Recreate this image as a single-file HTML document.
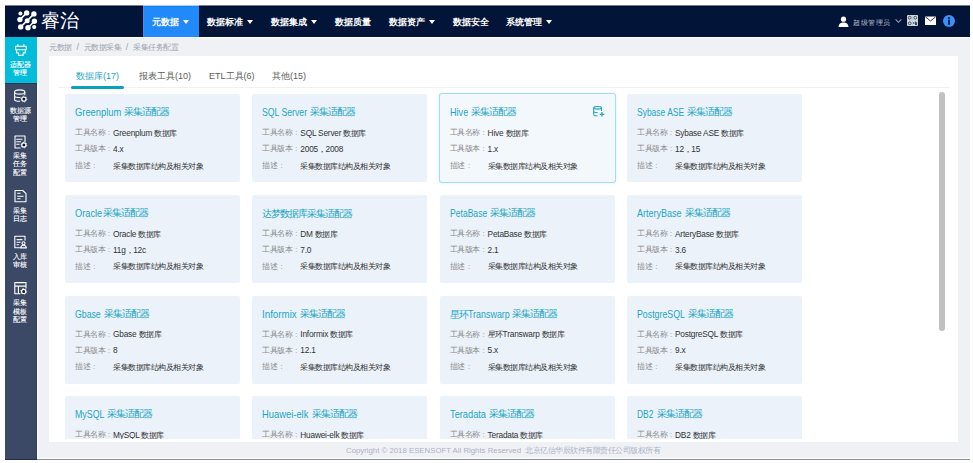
<!DOCTYPE html>
<html><head><meta charset="utf-8">
<style>
*{margin:0;padding:0;box-sizing:border-box}
html,body{width:973px;height:463px;overflow:hidden;background:#fff;font-family:"Liberation Sans",sans-serif}
.abs{position:absolute}
#nav{left:5px;top:5px;width:965px;height:32px;background:#021539}
#navtop{left:5px;top:5px;width:965px;height:1px;background:#7a7f8c}
#navtop2{left:5px;top:6px;width:965px;height:1px;background:#000a2c}
.mi{position:absolute;top:6px;height:32px;line-height:32px;color:#fff;font-weight:bold;font-size:9px;white-space:nowrap}
.tri{display:inline-block;width:0;height:0;border-left:3px solid transparent;border-right:3px solid transparent;border-top:4.5px solid #fff;vertical-align:middle;margin-left:4px;position:relative;top:-1px}
#side{left:5px;top:37px;width:32px;height:422px;background:#3c4966}
#sideact{left:5px;top:37px;width:32px;height:46px;background:#03bcd9}
.st{position:absolute;left:4.4px;width:32px;text-align:center;color:#fff;font-size:7px;line-height:8.3px;-webkit-text-stroke:0.12px #fff}
.si{position:absolute;left:14px;width:13px;height:13px}
#bg{left:37px;top:37px;width:933px;height:421px;background:#f0f1f5}
#bgw{left:37px;top:37px;width:1px;height:421px;background:#fff}
#crumb{left:49px;top:41.5px;width:200px;height:11px;font-size:7.5px;letter-spacing:-0.5px;color:#9aa1ae;white-space:nowrap;line-height:11px}
#crumb span{position:absolute;top:0}
#crumb .sl{letter-spacing:0;font-size:9px;top:0.7px}
#panel{left:49px;top:56px;width:909px;height:386px;background:#fff}
#tabline{left:58px;top:87px;width:891px;height:1px;background:#eff0f3}
#tabul{left:71px;top:86px;width:53px;height:3px;background:#0aa1c1;border-radius:1.5px}
.tab{position:absolute;top:69.5px;font-size:9px;color:#5c5c5c;white-space:nowrap;line-height:12px}
.card{position:absolute;width:175px;height:88px;background:#ebf2fa;border-radius:2px;overflow:hidden}
.card.h{background:#f3f8fd;overflow:visible;box-shadow:0 0 0 1px #a7dcea,0 0 3px 1px rgba(120,200,220,.3)}
.ct{position:absolute;left:10px;top:12px;font-size:10.5px;color:#22a5c4;white-space:nowrap;line-height:12px}
.ct em{font-style:normal;font-size:9.5px;letter-spacing:-1px}
.ct em.c{position:absolute;top:0}
.ct .l{display:inline-block;transform-origin:0 0}
.cr{position:absolute;left:10px;width:160px;height:10px;font-size:7.5px;white-space:nowrap;line-height:10px;color:#333}
.cr i{font-style:normal;position:absolute;left:0;top:0;color:#8c8c8c;letter-spacing:-0.5px}
.cr u{text-decoration:none;position:absolute;top:0;color:#8c8c8c}
.cr s{text-decoration:none;position:absolute;left:38px;top:-0.3px;font-size:8.3px;letter-spacing:-0.2px}
.cr s em{font-style:normal;font-size:7.5px;letter-spacing:-0.5px}
#clip{left:49px;top:92px;width:909px;height:347px;overflow:hidden}
#thumb{left:939px;top:92px;width:6px;height:239px;background:#c1c1c1;border-radius:3px}
#foot{left:0;top:446px;width:973px;height:10px;font-size:8px;color:#a9b3c6;line-height:10px;white-space:nowrap}
#fl{position:absolute;left:346px;top:0;font-size:7.8px}
#fc{position:absolute;left:525px;top:0;font-size:7.5px;letter-spacing:-0.5px}
#bline{left:5px;top:459px;width:965px;height:1px;background:#8d8d8d}
</style></head><body>
<div id="nav" class="abs"></div>
<div id="navtop" class="abs"></div>
<div id="navtop2" class="abs"></div>
<!-- logo -->
<svg class="abs" style="left:15px;top:9px" width="24" height="24" viewBox="0 0 24 24">
 <g fill="#fff">
  <circle cx="5.4" cy="4.4" r="2.0"/><circle cx="11.7" cy="3.9" r="2.7"/><circle cx="18.9" cy="4.9" r="2.7"/>
  <circle cx="4.9" cy="10.6" r="2.7"/><circle cx="12.2" cy="11.7" r="2.5"/><circle cx="19.4" cy="12.2" r="2.7"/>
  <circle cx="5.7" cy="17.9" r="2.7"/><circle cx="13" cy="18.7" r="2.7"/><circle cx="19.2" cy="18.1" r="2.1"/>
 </g>
 <path d="M4.9 10.6 L11.7 3.9 M5.7 17.9 L12.2 11.7 L18.9 4.9 M13 18.7 L19.4 12.2" stroke="#fff" stroke-width="1.6" fill="none"/>
</svg>
<div class="abs" style="left:41px;top:9px;font-size:19px;line-height:24px;color:#fff;white-space:nowrap;font-weight:300">睿治</div>
<!-- menu -->
<div class="abs" style="left:143px;top:5px;width:56px;height:32px;background:#2189f8"></div>
<div class="abs" style="left:143px;top:5px;width:56px;height:1px;background:#a9cff8"></div>
<div class="abs" style="left:143px;top:6px;width:56px;height:1px;background:#1282fb"></div>
<div class="abs" style="left:142px;top:6px;width:1px;height:31px;background:#000a26"></div>
<div class="abs" style="left:143px;top:6px;width:1px;height:31px;background:#2b97ff"></div>
<div class="mi" style="left:152px">元数据<span class="tri"></span></div>
<div class="mi" style="left:207px">数据标准<span class="tri"></span></div>
<div class="mi" style="left:271px">数据集成<span class="tri"></span></div>
<div class="mi" style="left:335px">数据质量</div>
<div class="mi" style="left:389px">数据资产<span class="tri"></span></div>
<div class="mi" style="left:453px">数据安全</div>
<div class="mi" style="left:506px">系统管理<span class="tri"></span></div>
<!-- right icons -->
<svg class="abs" style="left:838px;top:16px" width="11" height="11" viewBox="0 0 11 11"><circle cx="5.5" cy="3.2" r="2.6" fill="#fff"/><path d="M0.5 11 C0.8 7.5 2.8 6.4 5.5 6.4 C8.2 6.4 10.2 7.5 10.5 11 Z" fill="#fff"/></svg>
<div class="abs" style="left:853px;top:18px;font-size:7.3px;letter-spacing:0.6px;line-height:10px;color:#b9bfcc;white-space:nowrap">超级管理员</div>
<svg class="abs" style="left:895px;top:18px" width="7" height="6" viewBox="0 0 7 6"><path d="M0.6 1.3 L3.5 4.3 L6.4 1.3" stroke="#9aa2b4" stroke-width="1.1" fill="none"/></svg>
<svg class="abs" style="left:907px;top:15px" width="11" height="11" viewBox="0 0 11 11"><rect x="0" y="0" width="11" height="11" rx="1" fill="#d3d8e0"/><g fill="none" stroke="#3a4458" stroke-width="0.9"><circle cx="2.7" cy="2.7" r="1.4"/><circle cx="8.3" cy="2.7" r="1.4"/><circle cx="2.7" cy="8.3" r="1.4"/></g><rect x="5.1" y="0" width="0.9" height="11" fill="#9fd6e6"/><rect x="0" y="5.1" width="11" height="0.8" fill="#c8d0dc"/><circle cx="6.8" cy="8" r="0.8" fill="#1a2740"/><path d="M8.6 6.6 V10 M9.6 7.4 V10" stroke="#1a2740" stroke-width="0.9"/></svg>
<svg class="abs" style="left:925px;top:16px" width="11" height="9" viewBox="0 0 11 9"><rect x="0" y="0.5" width="11" height="8.5" fill="#fff"/><path d="M0.3 0.8 L5.5 5 L10.7 0.8" stroke="#223" stroke-width="0.9" fill="none"/></svg>
<svg class="abs" style="left:943px;top:15px" width="12" height="12" viewBox="0 0 12 12"><circle cx="6" cy="6" r="6" fill="#3d8ef7"/><rect x="5.1" y="2.2" width="1.8" height="1.6" fill="#021539"/><rect x="5.1" y="4.6" width="1.8" height="5.2" fill="#021539"/></svg>

<!-- sidebar -->
<div id="side" class="abs"></div>
<div id="sideact" class="abs"></div>
<div class="abs" style="left:5px;top:83px;width:32px;height:1px;background:#2b3550"></div>
<div class="abs" style="left:36px;top:84px;width:1px;height:375px;background:#313d59"></div>

<svg class="abs" style="left:0;top:0" width="40" height="463" viewBox="0 0 40 463">
<g fill="none" stroke="#fff" stroke-width="1.1" stroke-linejoin="round">
<path d="M17.8 44.3 V46.3 M23.9 44.3 V46.3"/>
<rect x="15.6" y="46.4" width="10.6" height="3.4"/>
<path d="M16.6 49.8 V52.9 H18.6 V55.3 H23.2 V52.9 H25.3 V49.8"/>
<ellipse cx="19.7" cy="92" rx="5.1" ry="2.1"/>
<path d="M14.6 92 V99.8 C14.6 100.8 16.6 101.3 20 101.3 M14.6 96 C14.6 97 16.6 97.5 20.5 97.5 M24.8 92 V95.2"/>
<circle cx="23.9" cy="99.1" r="2.1" stroke-width="1.2" fill="#0e1a3a"/><circle cx="23.9" cy="99.1" r="2.9" stroke-width="0.9" stroke-dasharray="1.2 1.84" fill="none"/>
<path d="M20.5 148 H15 V136 H25 V142"/>
<path d="M16.3 139.2 H22.5 M16.3 141.7 H21 M16.3 144.3 H19.5"/>
<circle cx="23.9" cy="145" r="2.1" stroke-width="1.2" fill="#0e1a3a"/><circle cx="23.9" cy="145" r="2.9" stroke-width="0.9" stroke-dasharray="1.2 1.84" fill="none"/>
<path d="M15 190.5 H22.8 L26 193.7 V201.8 H15 Z"/>
<path d="M17.2 193.3 H20.5 M17.2 196.3 H23.6 M17.2 198.8 H20.5"/>
<path d="M20 247.8 H14.8 V236.3 H25 V240.5"/>
<path d="M16.6 239.6 H22.5 M16.6 242.3 H20.5 M16.6 244.7 H19"/>
<circle cx="23.5" cy="243.2" r="1.5"/>
<path d="M20.6 247.9 C21 245.9 22.2 245.3 23.5 245.3 C24.8 245.3 26 245.9 26.4 247.9 Z"/>
<path d="M20.5 293.8 H14.8 V282.6 H26 V288.5 M14.8 286.1 H26 M18.4 286.1 V293.8"/>
<circle cx="23.7" cy="291.4" r="2.1" stroke-width="1.2" fill="#0e1a3a"/><circle cx="23.7" cy="291.4" r="2.9" stroke-width="0.9" stroke-dasharray="1.2 1.84" fill="none"/>
</g></svg>
<div class="st" style="top:60.7px">适配器</div>
<div class="st" style="top:69.0px">管理</div>
<div class="st" style="top:106.7px">数据源</div>
<div class="st" style="top:115.0px">管理</div>
<div class="st" style="top:152.0px">采集</div>
<div class="st" style="top:160.3px">任务</div>
<div class="st" style="top:168.6px">配置</div>
<div class="st" style="top:207.1px">采集</div>
<div class="st" style="top:215.4px">日志</div>
<div class="st" style="top:252.7px">入库</div>
<div class="st" style="top:261.0px">审核</div>
<div class="st" style="top:299.3px">采集</div>
<div class="st" style="top:307.6px">模板</div>
<div class="st" style="top:315.9px">配置</div>
<!-- bg -->
<div id="bg" class="abs"></div>
<div id="bgw" class="abs"></div>
<div class="abs" style="left:37px;top:37px;width:933px;height:1px;background:#fff"></div>
<div class="abs" style="left:37px;top:458px;width:933px;height:1px;background:#fff"></div>
<div id="bline" class="abs"></div>
<div class="abs" style="left:5px;top:459px;width:32px;height:1px;background:#222b40"></div>

<div id="crumb" class="abs"><span style="left:0">元数据</span><span class="sl" style="left:27.6px">/</span><span style="left:34.8px">元数据采集</span><span class="sl" style="left:76.7px">/</span><span style="left:84px">采集任务配置</span></div>
<div id="panel" class="abs"></div>
<div id="tabline" class="abs"></div>
<div id="tabul" class="abs"></div>
<div class="tab" style="left:76px;color:#22a5c4">数据库(17)</div>
<div class="tab" style="left:139px">报表工具(10)</div>
<div class="tab" style="left:209px">ETL工具(6)</div>
<div class="tab" style="left:272px">其他(15)</div>

<div id="clip" class="abs">
<div class="card" style="left:16px;top:2.3px"><div class="ct"><span class="l" style="transform:scaleX(0.891)">Greenplum</span><em class="c" style="left:49.3px">采集适配器</em></div><div class="cr" style="top:34px"><i>工具名称</i><u style="left:33px">:</u><s>Greenplum <em>数据库</em></s></div><div class="cr" style="top:50px"><i>工具版本</i><u style="left:33px">:</u><s>4.x</s></div><div class="cr" style="top:66.5px"><i>描述</i><u style="left:18.3px">:</u><s><em>采集数据库结构及相关对象</em></s></div></div>
<div class="card" style="left:203.3px;top:2.3px"><div class="ct"><span class="l" style="transform:scaleX(0.828)">SQL Server</span><em class="c" style="left:48.1px">采集适配器</em></div><div class="cr" style="top:34px"><i>工具名称</i><u style="left:33px">:</u><s>SQL Server <em>数据库</em></s></div><div class="cr" style="top:50px"><i>工具版本</i><u style="left:33px">:</u><s>2005<em>，</em>2008</s></div><div class="cr" style="top:66.5px"><i>描述</i><u style="left:18.3px">:</u><s><em>采集数据库结构及相关对象</em></s></div></div>
<div class="card h" style="left:390.6px;top:2.3px"><div class="ct"><span class="l" style="transform:scaleX(0.866)">Hive</span><em class="c" style="left:21.2px">采集适配器</em></div><svg class="abs" style="left:153px;top:12px" width="12" height="11" viewBox="0 0 12 11"><g fill="none" stroke="#22a5c4" stroke-width="1.1"><ellipse cx="4.6" cy="1.8" rx="3.9" ry="1.3"/><path d="M0.7 1.8 V8.6 C0.7 9.4 2.4 10 4.6 10 M8.5 1.8 V5 M0.7 5.2 C0.7 6 2.4 6.6 4.6 6.6"/><path d="M9 6 V10.6 M6.7 8.3 H11.3" stroke-width="1.3"/></g></svg><div class="cr" style="top:34px"><i>工具名称</i><u style="left:33px">:</u><s>Hive <em>数据库</em></s></div><div class="cr" style="top:50px"><i>工具版本</i><u style="left:33px">:</u><s>1.x</s></div><div class="cr" style="top:66.5px"><i>描述</i><u style="left:18.3px">:</u><s><em>采集数据库结构及相关对象</em></s></div></div>
<div class="card" style="left:578px;top:2.3px"><div class="ct"><span class="l" style="transform:scaleX(0.807)">Sybase ASE</span><em class="c" style="left:50.1px">采集适配器</em></div><div class="cr" style="top:34px"><i>工具名称</i><u style="left:33px">:</u><s>Sybase ASE <em>数据库</em></s></div><div class="cr" style="top:50px"><i>工具版本</i><u style="left:33px">:</u><s>12<em>，</em>15</s></div><div class="cr" style="top:66.5px"><i>描述</i><u style="left:18.3px">:</u><s><em>采集数据库结构及相关对象</em></s></div></div>
<div class="card" style="left:16px;top:103px"><div class="ct"><span class="l" style="transform:scaleX(0.879)">Oracle</span><em class="c" style="left:27.6px">采集适配器</em></div><div class="cr" style="top:34px"><i>工具名称</i><u style="left:33px">:</u><s>Oracle <em>数据库</em></s></div><div class="cr" style="top:50px"><i>工具版本</i><u style="left:33px">:</u><s>11g<em>，</em>12c</s></div><div class="cr" style="top:66.5px"><i>描述</i><u style="left:18.3px">:</u><s><em>采集数据库结构及相关对象</em></s></div></div>
<div class="card" style="left:203.3px;top:103px"><div class="ct"><em>达梦数据库采集适配器</em></div><div class="cr" style="top:34px"><i>工具名称</i><u style="left:33px">:</u><s>DM <em>数据库</em></s></div><div class="cr" style="top:50px"><i>工具版本</i><u style="left:33px">:</u><s>7.0</s></div><div class="cr" style="top:66.5px"><i>描述</i><u style="left:18.3px">:</u><s><em>采集数据库结构及相关对象</em></s></div></div>
<div class="card" style="left:390.6px;top:103px"><div class="ct"><span class="l" style="transform:scaleX(0.817)">PetaBase</span><em class="c" style="left:40.2px">采集适配器</em></div><div class="cr" style="top:34px"><i>工具名称</i><u style="left:33px">:</u><s>PetaBase <em>数据库</em></s></div><div class="cr" style="top:50px"><i>工具版本</i><u style="left:33px">:</u><s>2.1</s></div><div class="cr" style="top:66.5px"><i>描述</i><u style="left:18.3px">:</u><s><em>采集数据库结构及相关对象</em></s></div></div>
<div class="card" style="left:578px;top:103px"><div class="ct"><span class="l" style="transform:scaleX(0.859)">ArteryBase</span><em class="c" style="left:47.6px">采集适配器</em></div><div class="cr" style="top:34px"><i>工具名称</i><u style="left:33px">:</u><s>ArteryBase <em>数据库</em></s></div><div class="cr" style="top:50px"><i>工具版本</i><u style="left:33px">:</u><s>3.6</s></div><div class="cr" style="top:66.5px"><i>描述</i><u style="left:18.3px">:</u><s><em>采集数据库结构及相关对象</em></s></div></div>
<div class="card" style="left:16px;top:203.6px"><div class="ct"><span class="l" style="transform:scaleX(0.831)">Gbase</span><em class="c" style="left:28.7px">采集适配器</em></div><div class="cr" style="top:34px"><i>工具名称</i><u style="left:33px">:</u><s>Gbase <em>数据库</em></s></div><div class="cr" style="top:50px"><i>工具版本</i><u style="left:33px">:</u><s>8</s></div><div class="cr" style="top:66.5px"><i>描述</i><u style="left:18.3px">:</u><s><em>采集数据库结构及相关对象</em></s></div></div>
<div class="card" style="left:203.3px;top:203.6px"><div class="ct"><span class="l" style="transform:scaleX(0.929)">Informix</span><em class="c" style="left:37.7px">采集适配器</em></div><div class="cr" style="top:34px"><i>工具名称</i><u style="left:33px">:</u><s>Informix <em>数据库</em></s></div><div class="cr" style="top:50px"><i>工具版本</i><u style="left:33px">:</u><s>12.1</s></div><div class="cr" style="top:66.5px"><i>描述</i><u style="left:18.3px">:</u><s><em>采集数据库结构及相关对象</em></s></div></div>
<div class="card" style="left:390.6px;top:203.6px"><div class="ct"><em class="p">星环</em><span class="l" style="transform:scaleX(0.849);position:absolute;left:18px;top:0">Transwarp</span><em class="c" style="left:62.8px">采集适配器</em></div><div class="cr" style="top:34px"><i>工具名称</i><u style="left:33px">:</u><s><em>星环</em>Transwarp <em>数据库</em></s></div><div class="cr" style="top:50px"><i>工具版本</i><u style="left:33px">:</u><s>5.x</s></div><div class="cr" style="top:66.5px"><i>描述</i><u style="left:18.3px">:</u><s><em>采集数据库结构及相关对象</em></s></div></div>
<div class="card" style="left:578px;top:203.6px"><div class="ct"><span class="l" style="transform:scaleX(0.837)">PostgreSQL</span><em class="c" style="left:50.9px">采集适配器</em></div><div class="cr" style="top:34px"><i>工具名称</i><u style="left:33px">:</u><s>PostgreSQL <em>数据库</em></s></div><div class="cr" style="top:50px"><i>工具版本</i><u style="left:33px">:</u><s>9.x</s></div><div class="cr" style="top:66.5px"><i>描述</i><u style="left:18.3px">:</u><s><em>采集数据库结构及相关对象</em></s></div></div>
<div class="card" style="left:16px;top:304.3px"><div class="ct"><span class="l" style="transform:scaleX(0.840)">MySQL</span><em class="c" style="left:32.4px">采集适配器</em></div><div class="cr" style="top:34px"><i>工具名称</i><u style="left:33px">:</u><s>MySQL <em>数据库</em></s></div><div class="cr" style="top:50px"><i>工具版本</i><u style="left:33px">:</u><s>-</s></div><div class="cr" style="top:66.5px"><i>描述</i><u style="left:18.3px">:</u><s><em>采集数据库结构及相关对象</em></s></div></div>
<div class="card" style="left:203.3px;top:304.3px"><div class="ct"><span class="l" style="transform:scaleX(0.893)">Huawei-elk</span><em class="c" style="left:49.4px">采集适配器</em></div><div class="cr" style="top:34px"><i>工具名称</i><u style="left:33px">:</u><s>Huawei-elk <em>数据库</em></s></div><div class="cr" style="top:50px"><i>工具版本</i><u style="left:33px">:</u><s>-</s></div><div class="cr" style="top:66.5px"><i>描述</i><u style="left:18.3px">:</u><s><em>采集数据库结构及相关对象</em></s></div></div>
<div class="card" style="left:390.6px;top:304.3px"><div class="ct"><span class="l" style="transform:scaleX(0.881)">Teradata</span><em class="c" style="left:39.0px">采集适配器</em></div><div class="cr" style="top:34px"><i>工具名称</i><u style="left:33px">:</u><s>Teradata <em>数据库</em></s></div><div class="cr" style="top:50px"><i>工具版本</i><u style="left:33px">:</u><s>-</s></div><div class="cr" style="top:66.5px"><i>描述</i><u style="left:18.3px">:</u><s><em>采集数据库结构及相关对象</em></s></div></div>
<div class="card" style="left:578px;top:304.3px"><div class="ct"><span class="l" style="transform:scaleX(0.807)">DB2</span><em class="c" style="left:19.5px">采集适配器</em></div><div class="cr" style="top:34px"><i>工具名称</i><u style="left:33px">:</u><s>DB2 <em>数据库</em></s></div><div class="cr" style="top:50px"><i>工具版本</i><u style="left:33px">:</u><s>-</s></div><div class="cr" style="top:66.5px"><i>描述</i><u style="left:18.3px">:</u><s><em>采集数据库结构及相关对象</em></s></div></div>
</div>
<div id="thumb" class="abs"></div>
<div id="foot" class="abs"><span id="fl">Copyright © 2018 ESENSOFT All Rights Reserved</span><span id="fc">北京亿信华辰软件有限责任公司版权所有</span></div>
</body></html>
